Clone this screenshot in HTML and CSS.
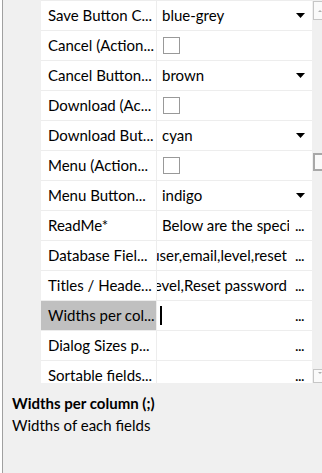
FILE: index.html
```html
<!DOCTYPE html>
<html lang="en">
<head>
    <meta charset="UTF-8">
    <title>Properties</title>
    <link rel="stylesheet" href="styles.css">
</head>
<body>

<div class="frame">
    <div class="grid">
        <div class="gutter"></div>
        <div class="rows">
            <div class="row">
                <div class="name">Save Button C...</div>
                <div class="value"><span class="text">blue-grey</span><svg class="drop" width="9" height="5" viewBox="0 0 9 5"><polygon points="0,0 9,0 4.5,5"/></svg></div>
            </div>
            <div class="row">
                <div class="name">Cancel (Action...</div>
                <div class="value"><span class="check"></span></div>
            </div>
            <div class="row">
                <div class="name">Cancel Button...</div>
                <div class="value"><span class="text">brown</span><svg class="drop" width="9" height="5" viewBox="0 0 9 5"><polygon points="0,0 9,0 4.5,5"/></svg></div>
            </div>
            <div class="row">
                <div class="name">Download (Ac...</div>
                <div class="value"><span class="check"></span></div>
            </div>
            <div class="row">
                <div class="name">Download But...</div>
                <div class="value"><span class="text">cyan</span><svg class="drop" width="9" height="5" viewBox="0 0 9 5"><polygon points="0,0 9,0 4.5,5"/></svg></div>
            </div>
            <div class="row">
                <div class="name">Menu (Action...</div>
                <div class="value"><span class="check"></span></div>
            </div>
            <div class="row">
                <div class="name">Menu Button...</div>
                <div class="value"><span class="text">indigo</span><svg class="drop" width="9" height="5" viewBox="0 0 9 5"><polygon points="0,0 9,0 4.5,5"/></svg></div>
            </div>
            <div class="row">
                <div class="name">ReadMe*</div>
                <div class="value"><span class="text">Below are the speci</span><span class="dots">...</span></div>
            </div>
            <div class="row">
                <div class="name">Database Fiel...</div>
                <div class="value"><span class="text scrolled"><span>user,email,level,reset</span></span><span class="dots">...</span></div>
            </div>
            <div class="row">
                <div class="name">Titles / Heade...</div>
                <div class="value"><span class="text scrolled"><span>level,Reset password</span></span><span class="dots">...</span></div>
            </div>
            <div class="row selected">
                <div class="name">Widths per col...</div>
                <div class="value"><span class="text editing"><span class="caret"></span></span><span class="dots">...</span></div>
            </div>
            <div class="row">
                <div class="name">Dialog Sizes p...</div>
                <div class="value"><span class="text"></span><span class="dots">...</span></div>
            </div>
            <div class="row">
                <div class="name">Sortable fields...</div>
                <div class="value"><span class="text"></span><span class="dots">...</span></div>
            </div>
        </div>
        <div class="scrollbar">
            <div class="sb-btn sb-up"><svg width="8" height="4" viewBox="0 0 8 4"><polygon points="0,4 8,4 4,0"/></svg></div>
            <div class="sb-thumb"></div>
            <div class="sb-btn sb-down"><svg width="8" height="4" viewBox="0 0 8 4"><polygon points="0,0 8,0 4,4"/></svg></div>
        </div>
    </div>

    <div class="help">
        <div class="help-title">Widths per column (;)</div>
        <div class="help-desc">Widths of each fields</div>
    </div>
</div>

</body>
</html>
```

FILE: styles.css
```css
:root {
    --panel-bg: #f0f0f0;
    --line-color: #ededed;
    --frame-border: #a0a0a0;
    --selected-bg: #c0c0c0;
    --font-family: 'Lato', 'Liberation Sans', sans-serif;
}

* {
    box-sizing: border-box;
    margin: 0;
    padding: 0;
}

body {
    width: 322px;
    height: 473px;
    overflow: hidden;
    background: #ffffff;
    font-family: var(--font-family);
    font-size: 15px;
    color: #000;
}

.frame {
    margin-left: 2px;
    height: 100%;
    border-left: 1px solid var(--frame-border);
    background: var(--panel-bg);
    display: flex;
    flex-direction: column;
}

/* property grid */
.grid {
    display: flex;
    height: 383px;
    overflow: hidden;
}

.gutter {
    width: 38px;
    background: var(--panel-bg);
}

.rows {
    width: 271px;
    background: #fff;
    border-top: 1px solid var(--line-color);
    overflow: hidden;
}

.row {
    display: flex;
    height: 30px;
    border-bottom: 1px solid var(--line-color);
    line-height: 29px;
}

.name {
    width: 116px;
    padding-left: 7px;
    border-right: 1px solid var(--line-color);
    white-space: nowrap;
    overflow: hidden;
}

.row.selected .name {
    background: var(--selected-bg);
}

.value {
    flex: 1;
    display: flex;
    align-items: center;
    padding-left: 5px;
    padding-right: 7px;
    min-width: 0;
}

.text {
    flex: 1;
    min-width: 0;
    white-space: nowrap;
    overflow: hidden;
    display: flex;
    align-items: center;
}

.text.scrolled {
    justify-content: flex-end;
    margin-left: -5px;
    margin-right: 2px;
}

.text.scrolled span {
    flex-shrink: 0;
}

.text.editing {
    margin-left: -2px;
}

.drop {
    fill: #000;
    flex-shrink: 0;
}

.dots {
    flex-shrink: 0;
    width: 10px;
    margin-left: 6px;
    letter-spacing: -0.5px;
}

.check {
    width: 17px;
    height: 17px;
    margin-left: 1px;
    border: 1px solid #999;
    background: #fff;
}

.caret {
    width: 2px;
    height: 19px;
    background: #000;
}

/* scrollbar, only its left edge is in view */
.scrollbar {
    width: 10px;
    padding-left: 1px;
    display: flex;
    flex-direction: column;
    background: var(--panel-bg);
}

.sb-btn {
    border: 1px solid #c6c6c6;
    border-right: none;
    background: #fafafa;
    display: flex;
    align-items: center;
    padding-left: 4px;
}

.sb-btn svg {
    fill: #b0b0b0;
}

.sb-up {
    margin-top: 1px;
    height: 19px;
}

.sb-thumb {
    margin-top: 133px;
    height: 18px;
    border: 2px solid #a8a8a8;
    border-right: none;
    background: #fafafa;
}

.sb-down {
    margin-top: auto;
    height: 14px;
    align-items: flex-start;
    padding-top: 1px;
}

/* description area */
.help {
    flex: 1;
    padding: 9px 9px 0;
    line-height: 22px;
}

.help-title {
    font-weight: 700;
}
```
